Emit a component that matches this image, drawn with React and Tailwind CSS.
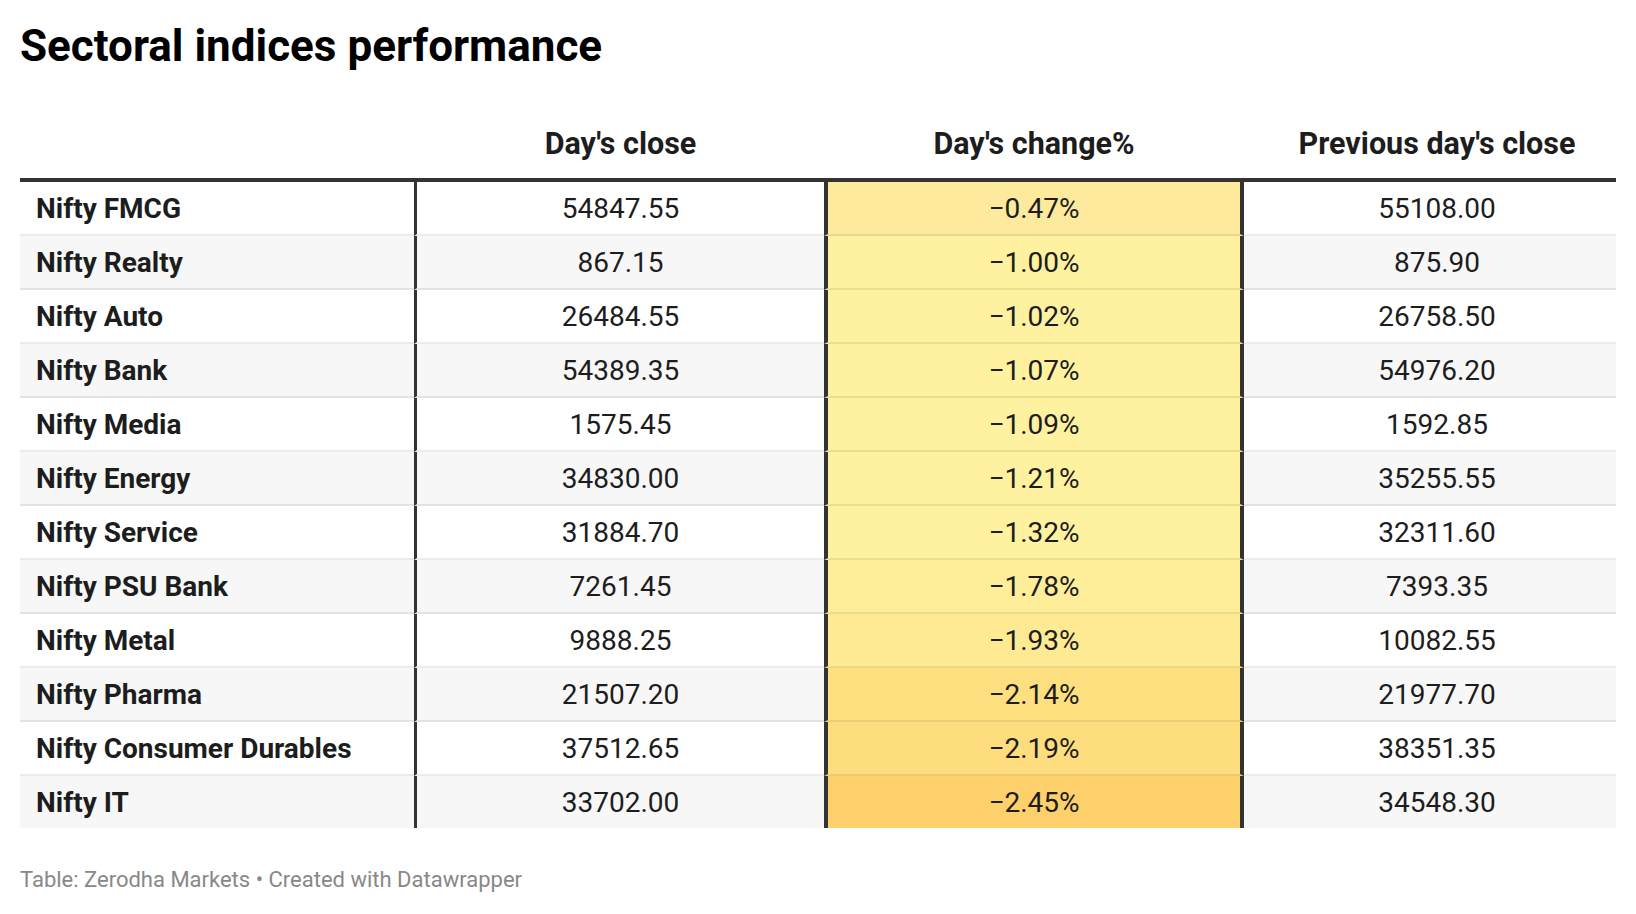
import React from "react";

const rows = [
  ["Nifty FMCG", "54847.55", "\u22120.47%", "55108.00", "#feea9c"],
  ["Nifty Realty", "867.15", "\u22121.00%", "875.90", "#fef1a0"],
  ["Nifty Auto", "26484.55", "\u22121.02%", "26758.50", "#fef1a0"],
  ["Nifty Bank", "54389.35", "\u22121.07%", "54976.20", "#fef1a0"],
  ["Nifty Media", "1575.45", "\u22121.09%", "1592.85", "#fef1a0"],
  ["Nifty Energy", "34830.00", "\u22121.21%", "35255.55", "#fef1a0"],
  ["Nifty Service", "31884.70", "\u22121.32%", "32311.60", "#fef19f"],
  ["Nifty PSU Bank", "7261.45", "\u22121.78%", "7393.35", "#feee9a"],
  ["Nifty Metal", "9888.25", "\u22121.93%", "10082.55", "#feea93"],
  ["Nifty Pharma", "21507.20", "\u22122.14%", "21977.70", "#fedf80"],
  ["Nifty Consumer Durables", "37512.65", "\u22122.19%", "38351.35", "#fedd7e"],
  ["Nifty IT", "33702.00", "\u22122.45%", "34548.30", "#fdd06c"],
];

export default function App() {
  return (
    <div className="w-[1636px] h-[914px] bg-white px-5 pt-[22px] font-['Roboto',sans-serif] text-[#1d1d1d]">
      <h1 className="text-[44px] leading-[48px] font-bold text-black">Sectoral indices performance</h1>
      <div className="mt-[56px] w-[1596px]">
        <div className="flex border-b-4 border-[#333] pb-4 text-[30.5px] leading-[36px] font-bold text-[#1d1d1d]">
          <div className="w-[394px]"></div>
          <div className="w-[410px] pl-[3px] text-center">Day's close</div>
          <div className="w-[420px] text-center">Day's change%</div>
          <div className="w-[372px] pl-[14px] text-center">Previous day's close</div>
        </div>
        {rows.map((r, i) => {
          const last = i === rows.length - 1;
          const bg = i % 2 === 1 ? "bg-[#f7f7f7]" : "bg-white";
          const bb = last ? "" : "border-b-2 border-b-black/[0.08]";
          return (
            <div key={r[0]} className={`flex h-[54px] last:h-[52px] ${bg} text-[28px] leading-[53px]`}>
              <div className={`w-[394px] pl-4 font-bold ${bb}`}>{r[0]}</div>
              <div className={`w-[410px] border-l-[3px] border-l-[#333] text-center ${bb}`}>{r[1]}</div>
              <div
                className={`w-[420px] border-x-4 border-x-[#333] text-center ${bb}`}
                style={{ backgroundColor: r[4] }}
              >
                {r[2]}
              </div>
              <div className={`w-[372px] pl-[14px] text-center ${bb}`}>{r[3]}</div>
            </div>
          );
        })}
      </div>
      <div className="mt-[38px] text-[22px] leading-[28px] text-[#888]">
        Table: Zerodha Markets • Created with Datawrapper
      </div>
    </div>
  );
}
